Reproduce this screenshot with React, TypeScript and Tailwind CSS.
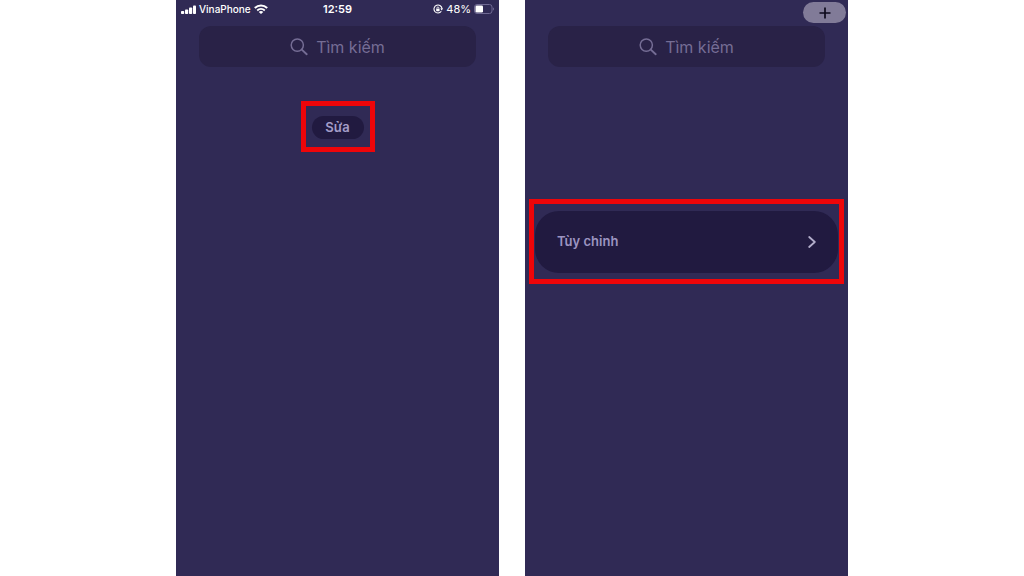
import { ReactNode } from "react";

function SignalIcon() {
  return (
    <svg viewBox="0 0 15 9" className="h-[9px] w-[15px]" fill="currentColor">
      <rect x="0" y="6" width="3.2" height="3" rx="0.8" />
      <rect x="4" y="4.4" width="3.2" height="4.6" rx="0.8" />
      <rect x="8" y="2.4" width="3.2" height="6.6" rx="0.8" />
      <rect x="12" y="0.4" width="3" height="8.6" rx="0.8" />
    </svg>
  );
}

function WifiIcon() {
  return (
    <svg viewBox="0 0 14 10" className="h-[10px] w-[14px]" fill="none" stroke="currentColor">
      <path d="M.8 4C4.4.6 9.6.6 13.2 4" strokeWidth="2" />
      <path d="M3.2 6.5c2.2-2 5.4-2 7.6 0" strokeWidth="1.8" />
      <path d="M7 10 4.7 7.9c1.3-1.1 3.3-1.1 4.6 0z" fill="currentColor" stroke="none" />
    </svg>
  );
}

function RotationLockIcon() {
  return (
    <svg viewBox="0 0 10 10" className="h-[10px] w-[10px]" fill="none" stroke="currentColor">
      <path d="M8.3 7.3A4 4 0 1 1 9 5" strokeWidth="1.1" />
      <path d="M7.2 4.5H10L8.7 6.5z" fill="currentColor" stroke="none" />
      <rect x="3.2" y="4.7" width="3.4" height="2.5" rx="0.4" fill="currentColor" stroke="none" />
      <path d="M3.9 4.8V4a1 1 0 0 1 2 0v.8" strokeWidth="0.8" />
    </svg>
  );
}

function BatteryIcon() {
  return (
    <svg viewBox="0 0 20 10" className="h-[10px] w-[20px]" fill="none">
      <rect x="0.5" y="0.5" width="17.5" height="9" rx="2.5" stroke="#6f6993" />
      <rect x="1.5" y="1.5" width="7.5" height="7" rx="1.3" fill="#fff" />
      <path d="M18.9 3.6v2.8c.8-.2 1.1-.8 1.1-1.4s-.3-1.2-1.1-1.4z" fill="#6f6993" />
    </svg>
  );
}

function SearchIcon() {
  return (
    <svg viewBox="0 0 18 18" className="h-[18px] w-[18px] shrink-0" fill="none" stroke="currentColor">
      <circle cx="7.3" cy="7.1" r="6.1" strokeWidth="1.5" />
      <path d="m11.8 11.6 4.9 4.6" strokeWidth="1.9" strokeLinecap="round" />
    </svg>
  );
}

function SearchBox({ id }: { id: string }) {
  return (
    <label
      htmlFor={id}
      className="mx-[23px] flex h-[41px] items-center justify-center gap-2 rounded-xl bg-[#292247] text-[#756d95]"
    >
      <SearchIcon />
      <input
        id={id}
        type="text"
        aria-label="Tìm kiếm"
        placeholder="Tìm kiếm"
        className="field-sizing-content bg-transparent text-base outline-none placeholder:text-[#756d95]"
      />
    </label>
  );
}

function Highlight({ children, className }: { children: ReactNode; className: string }) {
  return <div className={`border-[5px] border-[#ee0509] ${className}`}>{children}</div>;
}

function Phone({ children }: { children: ReactNode }) {
  return <section className="w-full max-w-[323px] bg-[#302a55]">{children}</section>;
}

export default function App() {
  return (
    <main className="flex min-h-screen justify-center gap-[26px] bg-white font-['Inter','Liberation_Sans',sans-serif]">
      <Phone>
        <div className="mb-2 grid h-[18px] grid-cols-3 items-center px-[5px] text-white">
          <div className="flex items-center gap-[3px] text-[10px] font-medium">
            <SignalIcon />
            <span>VinaPhone</span>
            <WifiIcon />
          </div>
          <span className="text-center text-[11px] font-semibold">12:59</span>
          <div className="flex items-center justify-end gap-[3px] text-[11px]">
            <RotationLockIcon />
            <span>48%</span>
            <BatteryIcon />
          </div>
        </div>
        <SearchBox id="search-widgets" />
        <div className="mt-[34px] flex justify-center">
          <Highlight className="px-[6px] pt-[10px] pb-2">
            <button
              type="button"
              className="flex h-[23px] w-[52px] items-center justify-center rounded-full bg-[#211a40] text-[13px] font-semibold text-[#a49dc8]"
            >
              Sửa
            </button>
          </Highlight>
        </div>
      </Phone>

      <Phone>
        <div className="flex h-[26px] justify-end pt-[2px] pr-[2px]">
          <button
            type="button"
            aria-label="Thêm"
            className="flex h-[21px] w-[43px] items-center justify-center rounded-full bg-[#817b98] text-[#0d0a1c]"
          >
            <svg viewBox="0 0 12 12" className="h-3 w-3" stroke="currentColor" strokeWidth="1.7">
              <path d="M6 .5v11M.5 6h11" />
            </svg>
          </button>
        </div>
        <SearchBox id="search-edit" />
        <Highlight className="mx-1 mt-[132px] px-px pt-[7px] pb-[6px]">
          <button
            type="button"
            className="flex h-[62px] w-full items-center justify-between rounded-3xl bg-[#211a40] px-[22px] text-[13px] font-semibold text-[#9c94c0]"
          >
            <span>Tùy chỉnh</span>
            <svg
              viewBox="0 0 8 12"
              className="h-3 w-2"
              fill="none"
              stroke="#b3aecb"
              strokeWidth="1.8"
              strokeLinecap="round"
              strokeLinejoin="round"
            >
              <path d="m1.2 1 5.6 5-5.6 5" />
            </svg>
          </button>
        </Highlight>
      </Phone>
    </main>
  );
}
